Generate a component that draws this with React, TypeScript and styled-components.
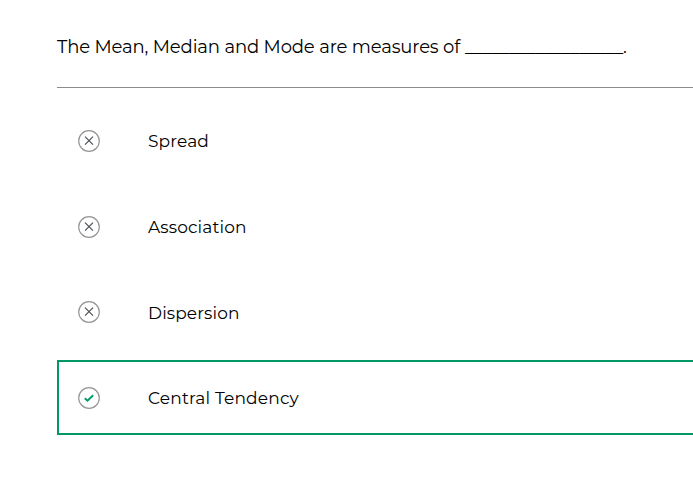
import React from "react";
import styled, { createGlobalStyle } from "styled-components";

const GlobalStyle = createGlobalStyle`
  * { box-sizing: border-box; }
  html, body { margin: 0; background: #fff; overflow: hidden; }
  body { font-family: Montserrat, Inter, "Liberation Sans", sans-serif; color: #000; }
`;

const Page = styled.main`
  width: 693px;
  height: 478px;
  padding: 34px 0 0 57px;
  overflow: hidden;
`;

const Question = styled.h1`
  display: flex;
  align-items: baseline;
  height: 54px;
  margin: 0;
  border-bottom: 1px solid #8c8c8c;
  font-size: 18px;
  font-weight: 400;
  line-height: 26px;
  white-space: pre;
`;

const Prompt = styled.span`
  width: 408px;
  letter-spacing: -0.14px;
`;

const Blank = styled.span`
  width: 158px;
  letter-spacing: -0.22px;
`;

const Answers = styled.ul`
  display: grid;
  grid-auto-rows: 75px;
  row-gap: 10.67px;
  margin: 0;
  padding: 15.4px 0 0;
  list-style: none;
`;

const Answer = styled.li<{ $correct?: boolean }>`
  display: flex;
  align-items: center;
  gap: 48px;
  padding-left: 19px;
  border: 2px solid ${(p) => (p.$correct ? "#019863" : "transparent")};
  border-right: 0;
`;

const Mark = styled.svg`
  flex: none;
  width: 22px;
  height: 22px;
  fill: none;
`;

const Label = styled.span<{ $spacing: number }>`
  padding-top: 0.7px;
  font-size: 17px;
  font-weight: 400;
  line-height: 24px;
  letter-spacing: ${(p) => p.$spacing}px;
  white-space: nowrap;
`;

const answers = [
  { text: "Spread", spacing: 0.15 },
  { text: "Association", spacing: 0.15 },
  { text: "Dispersion", spacing: 0.1 },
  { text: "Central Tendency", spacing: 0.18, correct: true },
];

function StatusIcon({ correct }: { correct?: boolean }) {
  return (
    <Mark viewBox="0 0 22 22" aria-hidden="true">
      <circle cx="11" cy="11" r="10.3" stroke="#969696" strokeWidth="1.2" />
      {correct ? (
        <path d="M6.8 11.2 L9.5 13.7 L15.2 8.2" stroke="#059c66" strokeWidth="2" />
      ) : (
        <path d="M7 6.6 L15 14.6 M15 6.6 L7 14.6" stroke="#4b5057" strokeWidth="1.2" />
      )}
    </Mark>
  );
}

export default function App() {
  return (
    <Page>
      <GlobalStyle />
      <Question>
        <Prompt>The Mean, Median and Mode are measures of</Prompt>
        <Blank>__________________</Blank>
        <span>.</span>
      </Question>
      <Answers>
        {answers.map(({ text, spacing, correct }) => (
          <Answer key={text} $correct={correct}>
            <StatusIcon correct={correct} />
            <Label $spacing={spacing}>{text}</Label>
          </Answer>
        ))}
      </Answers>
    </Page>
  );
}
